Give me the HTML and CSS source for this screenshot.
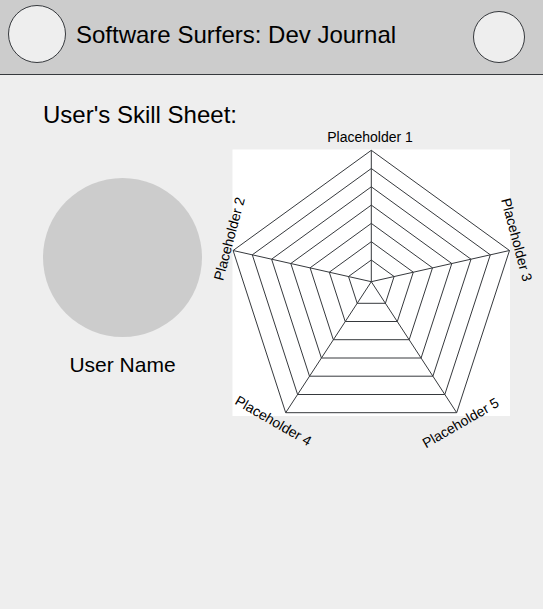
FILE: index.html
```html
<!DOCTYPE html>
<html lang="en">
<head>
  <meta charset="utf-8">
  <meta name="viewport" content="width=device-width, initial-scale=1">
  <title>Software Surfers: Dev Journal</title>
  <link rel="stylesheet" href="styles.css">
</head>
<body>
  <header class="site-header">
    <div class="logo"></div>
    <h1 class="site-title">Software Surfers: Dev Journal</h1>
    <div class="account"></div>
  </header>
  <main class="content">
    <h2 class="page-title">User's Skill Sheet:</h2>
    <div class="sheet">
      <section class="profile">
        <div class="avatar"></div>
        <p class="user-name">User Name</p>
      </section>
      <svg class="chart" viewBox="0 0 326 322" role="img" aria-label="Skill chart">
        <rect class="chart-area" x="22.5" y="20.5" width="277.5" height="266.5"/>
        <g class="web">
          <!-- Rings, outermost first -->
          <path d="M161.3 21.3L299.5 121.5L246.7 283.7L75.7 283.7L23.1 121.5Z"/>
          <path d="M161.3 39.5L280.3 125.8L234.8 265.5L87.6 265.5L42.3 125.8Z"/>
          <path d="M161.3 57.8L261 130.2L222.9 247.2L99.5 247.2L61.6 130.2Z"/>
          <path d="M161.3 76.1L241.8 134.5L211.1 229L111.4 229L80.8 134.5Z"/>
          <path d="M161.3 94.4L222.5 138.8L199.2 210.7L123.3 210.7L100.1 138.8Z"/>
          <path d="M161.3 112.7L203.3 143.2L187.3 192.5L135.2 192.5L119.3 143.2Z"/>
          <path d="M161.3 131L184.1 147.5L175.4 174.3L147.2 174.3L138.5 147.5Z"/>
          <!-- Spokes -->
          <path d="M161.3 152.7V21.3M161.3 152.7L299.5 121.5M161.3 152.7L246.7 283.7M161.3 152.7L75.7 283.7M161.3 152.7L23.1 121.5"/>
        </g>
        <g class="labels">
          <text x="160" y="13">Placeholder 1</text>
          <text transform="translate(24 111) rotate(-75)">Placeholder 2</text>
          <text transform="translate(302 112) rotate(75)">Placeholder 3</text>
          <text transform="translate(61 296) rotate(30)">Placeholder 4</text>
          <text transform="translate(253 298) rotate(-30)">Placeholder 5</text>
        </g>
      </svg>
    </div>
  </main>
</body>
</html>
```

FILE: styles.css
```css
* {
  box-sizing: border-box;
}

body {
  margin: 0;
  background: #eee;
  color: #000;
  font-family: "Liberation Sans", Arial, sans-serif;
}

h1,
h2,
p {
  margin: 0;
  font-weight: 400;
}

.site-header {
  display: flex;
  align-items: flex-end;
  gap: 10px;
  padding: 5px 18px 11px 8px;
  background: #ccc;
  border-bottom: 1px solid #36393d;
}

.logo,
.account {
  flex: none;
  aspect-ratio: 1;
  border: 1px solid #36393d;
  border-radius: 50%;
  background: #eee;
}

.logo {
  width: 58px;
}

.account {
  width: 52px;
}

.site-title {
  flex: 1;
  font-size: 24px;
  line-height: 56px;
}

.content {
  padding: 26px 7px 26px 43px;
}

.page-title {
  font-size: 24px;
  line-height: 28px;
}

.sheet {
  display: flex;
  align-items: flex-start;
  gap: 8px;
}

.profile {
  flex: none;
  width: 159px;
  padding-top: 49px;
}

.avatar {
  aspect-ratio: 1;
  border-radius: 50%;
  background: #ccc;
}

.user-name {
  margin-top: 16px;
  font-size: 21px;
  line-height: 24px;
  text-align: center;
}

.chart {
  flex: 1;
  min-width: 0;
  max-width: 480px;
  overflow: visible;
}

.chart-area {
  fill: #fff;
}

.web {
  fill: none;
  stroke: #36393d;
  stroke-width: 1px;
}

.labels {
  fill: #000;
  font-size: 14px;
  text-anchor: middle;
}
```
